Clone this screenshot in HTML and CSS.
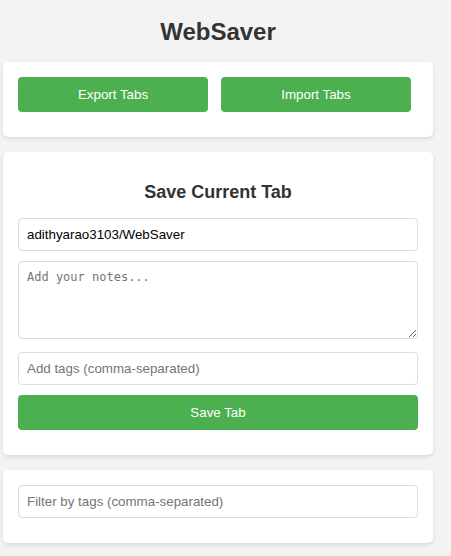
FILE: index.html
```html
<!DOCTYPE html>
<html>
<head>
<meta charset="utf-8">
<link rel="stylesheet" href="styles.css">
</head>
<body>
<div class="app">
  <h1 class="title">WebSaver</h1>
  <section class="card">
    <div class="actions">
      <button class="btn btn-half">Export Tabs</button>
      <button class="btn btn-half">Import Tabs</button>
    </div>
  </section>
  <section class="card">
    <h2 class="card-title">Save Current Tab</h2>
    <input class="field" type="text" value="adithyarao3103/WebSaver">
    <textarea class="field notes" placeholder="Add your notes..."></textarea>
    <input class="field" type="text" placeholder="Add tags (comma-separated)">
    <button class="btn btn-full">Save Tab</button>
  </section>
  <section class="card">
    <input class="field" type="text" placeholder="Filter by tags (comma-separated)">
  </section>
</div>
</body>
</html>
```
FILE: styles.css
```css
html, body {
  margin: 0;
  padding: 0;
  background: #f3f3f3;
}
body {
  font-family: "Liberation Sans", Arial, sans-serif;
  color: #333;
}
.app {
  width: 430px;
  margin-left: 3px;
  padding-top: 1px;
}
.title {
  font-size: 24px;
  font-weight: bold;
  text-align: center;
  margin: 17px 0 16px;
  color: #333;
}
.card {
  background: #fff;
  border-radius: 5px;
  box-shadow: 0 2px 4px rgba(0, 0, 0, 0.1);
  padding: 15px 15px 15px;
  margin-bottom: 15px;
}
.actions {
  display: flex;
  gap: 13px;
}
.btn {
  display: block;
  background: #4caf50;
  color: #fff;
  border: none;
  border-radius: 4px;
  font-family: "Liberation Sans", Arial, sans-serif;
  font-size: 13.333px;
  height: 35px;
  padding: 0 10px;
  margin-bottom: 10px;
  cursor: pointer;
}
.btn-half {
  width: 190px;
}
.btn-full {
  width: 400px;
}
.card-title {
  font-size: 18px;
  font-weight: bold;
  text-align: center;
  margin: 15px 0 15px;
  color: #333;
}
.field {
  display: block;
  box-sizing: border-box;
  width: 400px;
  height: 33px;
  padding: 8px;
  border: 1px solid #ddd;
  border-radius: 4px;
  font-family: "Liberation Sans", Arial, sans-serif;
  font-size: 13.333px;
  color: #000;
  margin: 0 0 10px;
  background: #fff;
}
.field::placeholder {
  color: #757575;
}
.notes {
  height: 78px;
  font-family: "DejaVu Sans Mono", monospace;
  font-size: 12px;
  margin-bottom: 13px;
  resize: vertical;
}
```
